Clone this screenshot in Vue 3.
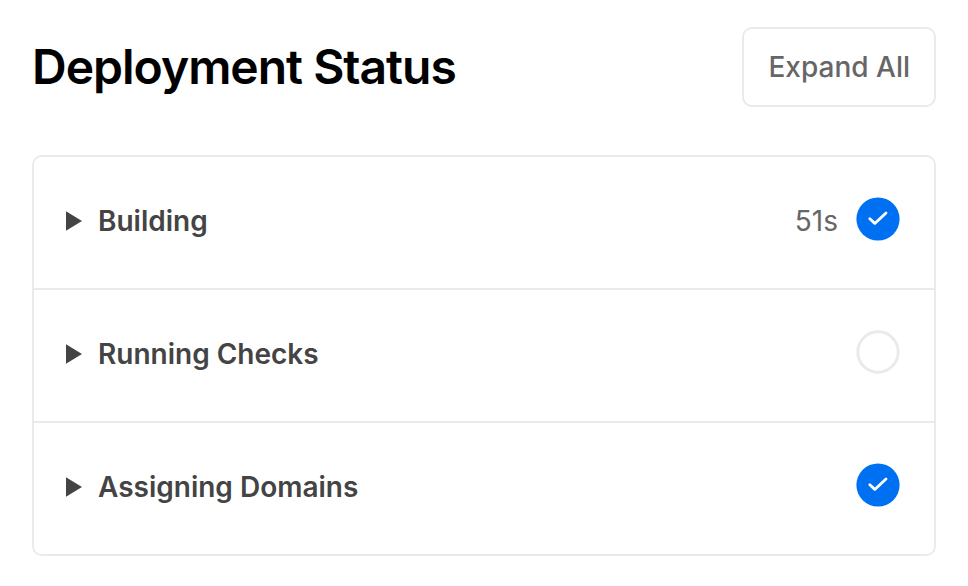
<script setup>
import { ref, computed } from 'vue'

const steps = ref([
  { name: 'Building', duration: '51s', done: true, open: false },
  { name: 'Running Checks', duration: '', done: false, open: false },
  { name: 'Assigning Domains', duration: '', done: true, open: false },
])

const allOpen = computed(() => steps.value.every((step) => step.open))

function toggleAll() {
  const next = !allOpen.value
  steps.value.forEach((step) => {
    step.open = next
  })
}
</script>

<template>
  <main class="page">
    <header class="head">
      <h1 class="title">Deployment Status</h1>
      <button class="expand" type="button" @click="toggleAll">{{ allOpen ? 'Collapse All' : 'Expand All' }}</button>
    </header>
    <ul class="steps">
      <li v-for="step in steps" :key="step.name" class="step">
        <button class="row" type="button" :aria-expanded="step.open" @click="step.open = !step.open">
          <span class="name">
            <svg class="arrow" :class="{ open: step.open }" viewBox="0 0 16 20" aria-hidden="true">
              <path d="M0 0.2 16 10 0 19.8Z" fill="#444" />
            </svg>
            {{ step.name }}
          </span>
          <span v-if="step.duration" class="duration">{{ step.duration }}</span>
          <svg class="status" viewBox="0 0 44 44" aria-hidden="true">
            <template v-if="step.done">
              <circle cx="22" cy="22" r="21.6" fill="#0070f3" />
              <path d="M13.8 21.8 18.8 26.4 30 15.9" fill="none" stroke="#fff" stroke-width="2.8" stroke-linecap="round" stroke-linejoin="round" />
            </template>
            <circle v-else cx="22" cy="22" r="20.2" fill="#fff" stroke="#eaeaea" stroke-width="2.9" />
          </svg>
        </button>
      </li>
    </ul>
  </main>
</template>

<style>
body {
  background: #fff;
}
</style>

<style scoped>
.page {
  padding: 27px 32px 30px;
  font-family: Inter, "Liberation Sans", sans-serif;
  color: #000;
}
.head {
  display: flex;
  align-items: center;
  justify-content: space-between;
  margin-bottom: 48px;
}
.title {
  margin: 0;
  font-size: 48px;
  line-height: 72px;
  font-weight: 600;
  letter-spacing: -1px;
}
.expand {
  height: 80px;
  padding: 0 24px;
  border: 2px solid #eaeaea;
  border-radius: 10px;
  background: #fff;
  color: #666;
  font: 500 28px/40px Inter, "Liberation Sans", sans-serif;
  cursor: pointer;
}
.steps {
  margin: 0;
  padding: 0;
  list-style: none;
  border: 2px solid #eaeaea;
  border-radius: 10px;
  overflow: hidden;
}
.step + .step {
  border-top: 2px solid #eaeaea;
}
.row {
  display: flex;
  align-items: flex-start;
  width: 100%;
  padding: 40px 34px 43px 32px;
  border: 0;
  background: #fff;
  color: #444;
  font: 600 28px/48px Inter, "Liberation Sans", sans-serif;
  text-align: left;
  cursor: pointer;
}
.name {
  display: flex;
  flex: 1;
  align-items: center;
  gap: 16px;
}
.arrow {
  width: 16px;
  height: 20px;
}
.arrow.open {
  transform: rotate(90deg);
}
.duration {
  margin-right: 18px;
  font-weight: 400;
  color: #666;
}
.status {
  width: 44px;
  height: 44px;
}
</style>
